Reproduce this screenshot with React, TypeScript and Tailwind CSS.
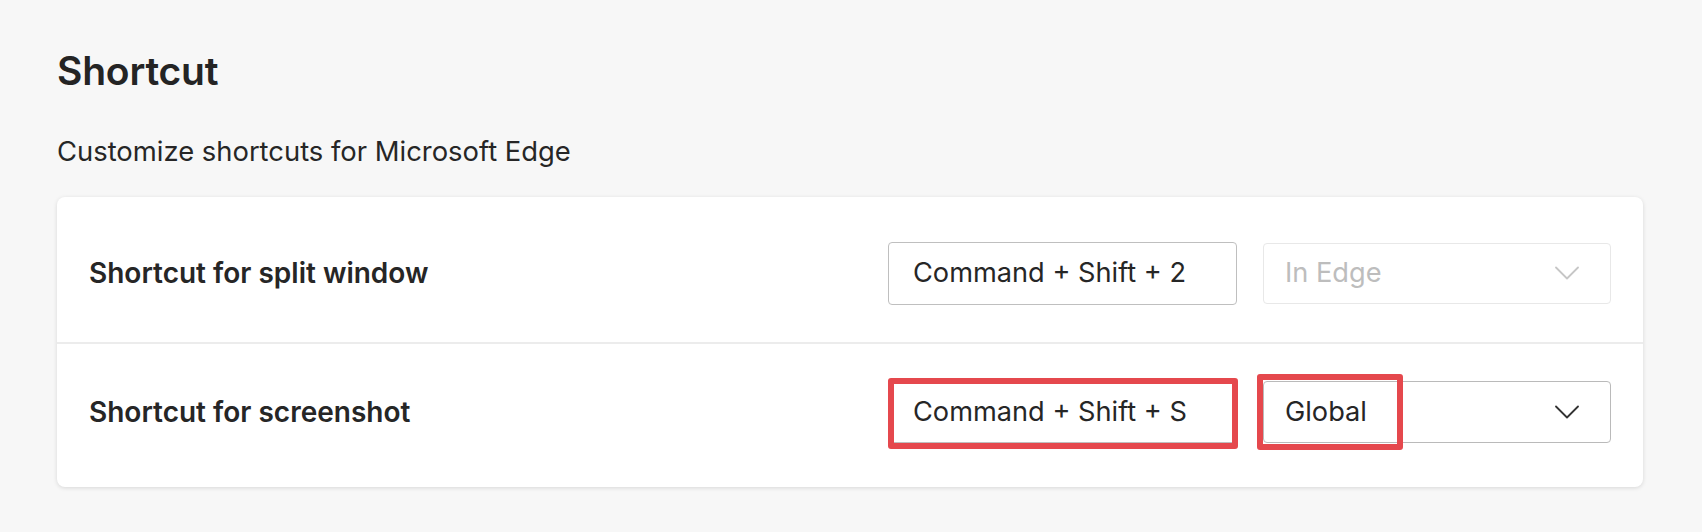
import React from "react";

function Chevron({ color }: { color: string }) {
  return (
    <svg width="24" height="14" viewBox="0 0 24 14" fill="none">
      <path d="M1 1.5 L12 12.5 L23 1.5" stroke={color} strokeWidth="1.8" strokeLinecap="round" strokeLinejoin="round" />
    </svg>
  );
}

export default function App() {
  return (
    <div
      className="w-[1702px] h-[532px] bg-[#f7f7f7] pl-[57px] pr-[59px] text-[#262626]"
      style={{ fontFamily: "Inter, 'Noto Sans', 'Liberation Sans', sans-serif" }}
    >
      <h1 className="pt-[48px] text-[39px] leading-[46px] font-semibold tracking-[-0.2px] text-[#242424]">Shortcut</h1>
      <p className="mt-[40px] text-[27.4px] leading-[34px] text-[#262626]">Customize shortcuts for Microsoft Edge</p>
      <div className="mt-[29px] bg-white rounded-[8px] shadow-[0_1px_4px_rgba(0,0,0,0.13)] pt-[7px] pb-[7px]">
        <div className="h-[138px] flex items-center px-[32px] gap-[26px]">
          <div className="flex-1 text-[28px] font-semibold">Shortcut for split window</div>
          <div className="w-[349px] h-[63px] border-[1.5px] border-[#bfbfbf] rounded-[4px] flex items-center pl-[24px] text-[27.2px]">
            Command + Shift + 2
          </div>
          <div className="w-[348px] h-[61px] border-[1.5px] border-[#e8e8e8] rounded-[4px] flex items-center justify-between pl-[21px] pr-[31px] text-[27.2px] text-[#bdbdbd]">
            <span>In Edge</span>
            <Chevron color="#c6c6c6" />
          </div>
        </div>
        <div className="h-[2px] bg-[#ececec]" />
        <div className="h-[136px] flex items-center px-[32px] gap-[26px]">
          <div className="flex-1 text-[28px] font-semibold">Shortcut for screenshot</div>
          <div className="relative w-[349px] h-[62px] border-[1.5px] border-[#bfbfbf] rounded-[4px] flex items-center pl-[24px] text-[27.2px]">
            Command + Shift + S
            <div className="absolute left-[-1.5px] right-[-1.5px] top-[-4.5px] bottom-[-6.5px] border-[6px] border-[#e5484d] rounded-[3px]" />
          </div>
          <div className="relative w-[348px] h-[62px] border-[1.5px] border-[#bababa] rounded-[4px] flex items-center justify-between pl-[21px] pr-[31px] text-[27.2px]">
            <span>Global</span>
            <Chevron color="#333333" />
            <div className="absolute left-[-7.5px] top-[-8.5px] w-[146px] h-[76px] border-[6px] border-[#e5484d] rounded-[3px]" />
          </div>
        </div>
      </div>
    </div>
  );
}
